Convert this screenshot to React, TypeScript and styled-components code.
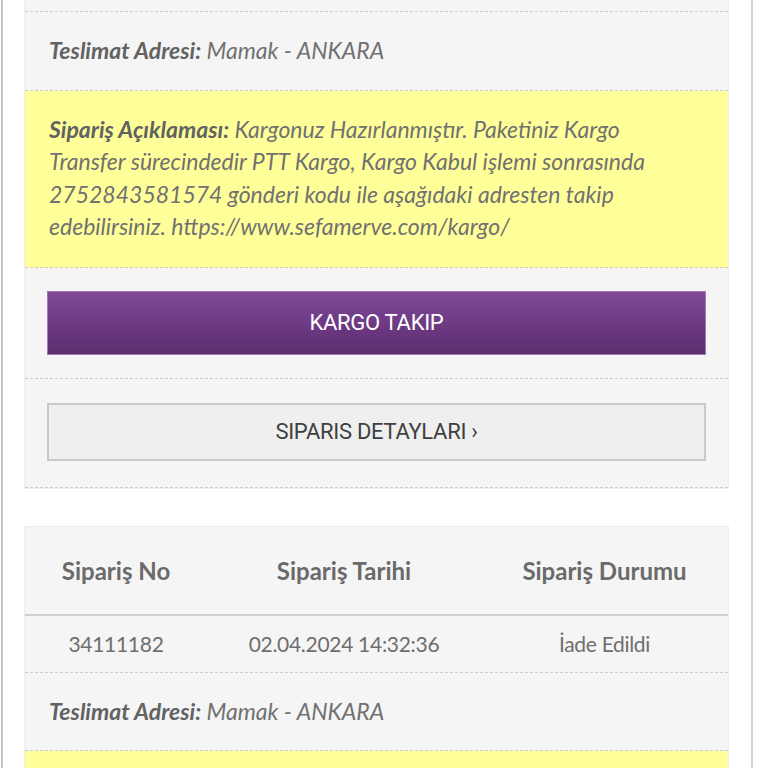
import React, { FC } from 'react'
import styled, { createGlobalStyle } from 'styled-components'

type Order = {
  no: string
  date: string
  status: string
  address: string
  note: string
}

const orders: Order[] = [
  {
    no: '34111190',
    date: '05.04.2024 11:02:14',
    status: 'Kargoya Verildi',
    address: 'Mamak - ANKARA',
    note:
      'Kargonuz Hazırlanmıştır. Paketiniz Kargo Transfer sürecindedir PTT Kargo, Kargo Kabul işlemi sonrasında 2752843581574 gönderi kodu ile aşağıdaki adresten takip edebilirsiniz. https://www.sefamerve.com/kargo/',
  },
  {
    no: '34111182',
    date: '02.04.2024 14:32:36',
    status: 'İade Edildi',
    address: 'Mamak - ANKARA',
    note:
      'Kargonuz Hazırlanmıştır. Paketiniz Kargo Transfer sürecindedir PTT Kargo, Kargo Kabul işlemi sonrasında 2752843581574 gönderi kodu ile aşağıdaki adresten takip edebilirsiniz.',
  },
]

const OrderCard: FC<{ order: Order }> = ({ order }) => (
  <Card>
    <HeadRow>
      <HeadCell>Sipariş No</HeadCell>
      <HeadCell>Sipariş Tarihi</HeadCell>
      <HeadCell>Sipariş Durumu</HeadCell>
    </HeadRow>
    <DataRow>
      <DataCell>{order.no}</DataCell>
      <DataCell>{order.date}</DataCell>
      <DataCell>{order.status}</DataCell>
    </DataRow>
    <InfoRow>
      <Label>Teslimat Adresi:</Label> {order.address}
    </InfoRow>
    <InfoRow $note>
      <Label>Sipariş Açıklaması:</Label> {order.note}
    </InfoRow>
    <ButtonRow $top={23} $bottom={23}>
      <TrackButton>KARGO TAKIP</TrackButton>
    </ButtonRow>
    <ButtonRow $top={24} $bottom={26}>
      <DetailButton>SIPARIS DETAYLARI ›</DetailButton>
    </ButtonRow>
  </Card>
)

export default function App() {
  return (
    <>
      <GlobalStyle />
      <Frame>
        <List>
          {orders.map((o) => (
            <OrderCard key={o.no} order={o} />
          ))}
        </List>
      </Frame>
    </>
  )
}

const GlobalStyle = createGlobalStyle`
  html, body {
    margin: 0;
    padding: 0;
    background: #ffffff;
    overflow: hidden;
  }
  body {
    font-family: Lato, 'Open Sans', sans-serif;
    color: #666666;
  }
`

const Frame = styled.div`
  margin-left: 1px;
  width: 752px;
  height: 768px;
  overflow: hidden;
  border-left: 2px solid #c6c6c6;
  border-right: 2px solid #d2d2d2;
  padding: 0 23px 0 22px;
  box-sizing: border-box;
`

const List = styled.div`
  display: flex;
  flex-direction: column;
  gap: 39px;
  margin-top: -134px;
`

const Card = styled.div`
  width: 703px;
  background: #f5f5f5;
  box-shadow: 0 0 0 1px #eeeeee;
`

const HeadRow = styled.div`
  display: grid;
  grid-template-columns: 182px 274px 247px;
  height: 87px;
  align-items: center;
  border-bottom: 2px solid #cfcfcf;
`

const HeadCell = styled.div`
  text-align: center;
  font-size: 24px;
  font-weight: 700;
  color: #6a6a6a;
`

const DataRow = styled.div`
  display: grid;
  grid-template-columns: 182px 274px 247px;
  height: 56px;
  align-items: center;
  border-bottom: 1px dashed #cccccc;
`

const DataCell = styled.div`
  text-align: center;
  font-size: 21px;
  color: #6e6e6e;
  letter-spacing: -0.3px;
`

const InfoRow = styled.div<{ $note?: boolean }>`
  padding: ${(p) => (p.$note ? '22px 40px 24px 24px' : '22px 24px 23px 24px')};
  min-height: ${(p) => (p.$note ? '0' : '32px')};
  background: ${(p) => (p.$note ? '#ffff99' : 'transparent')};
  border-bottom: 1px dashed #cccccc;
  font-size: 23px;
  line-height: 32.5px;
  font-style: italic;
  color: #717171;
`

const Label = styled.b`
  font-weight: 700;
  color: #626262;
`

const ButtonRow = styled.div<{ $top: number; $bottom: number }>`
  padding: ${(p) => `${p.$top}px 22px ${p.$bottom}px 22px`};
  border-bottom: 1px dashed #cccccc;
`

const TrackButton = styled.div`
  height: 64px;
  display: flex;
  align-items: center;
  justify-content: center;
  box-sizing: border-box;
  border: 1px solid #a477b5;
  background: linear-gradient(to bottom, #824a99 0%, #6e3a84 50%, #5d2d6e 100%);
  color: #ffffff;
  font-family: Roboto, 'Liberation Sans', sans-serif;
  font-size: 22px;
  letter-spacing: -0.3px;
`

const DetailButton = styled.div`
  height: 58px;
  display: flex;
  align-items: center;
  justify-content: center;
  box-sizing: border-box;
  border: 2px solid #c9c9c9;
  background: #efefef;
  color: #3f3f3f;
  font-family: Roboto, 'Liberation Sans', sans-serif;
  font-size: 22px;
  letter-spacing: -0.3px;
`
